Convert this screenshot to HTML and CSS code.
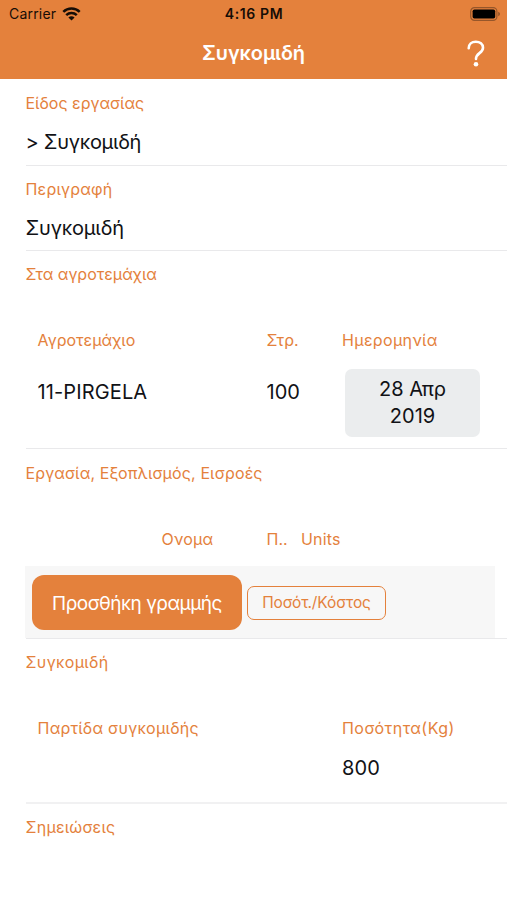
FILE: index.html
```
<!DOCTYPE html>
<html lang="el">
<head>
<meta charset="utf-8">
<title>Συγκομιδή</title>
<link rel="stylesheet" href="styles.css">
</head>
<body>
<header class="top">
  <div class="status">
    <div class="carrier"><span class="t-carrier">Carrier</span>
      <svg class="wifi" width="19" height="14" viewBox="0 0 18 14" fill="none" stroke="#160d06" stroke-width="2.5"><path d="M.8 4.9C5.4.5 12.6.5 17.2 4.9M3.7 8.1c3-2.8 7.6-2.8 10.6 0"/><path d="M9 13.6 5.9 10.5c1.7-1.6 4.5-1.6 6.2 0z" fill="#160d06" stroke="none"/></svg>
    </div>
    <span class="clock">4:16 PM</span>
    <svg class="battery" width="31" height="14" viewBox="0 0 31 14"><rect x=".7" y=".6" width="26.2" height="12.8" rx="3.8" fill="none" stroke="#96562a" stroke-width="1.2"/><rect x="2.6" y="2.4" width="22.6" height="9.2" rx="1.8" fill="#000"/><path d="M28.2 4.8c2.4.8 2.4 3.6 0 4.4z" fill="#96562a"/></svg>
  </div>
  <div class="nav">
    <h1 class="title">Συγκομιδή</h1>
    <svg class="help" width="18" height="27" viewBox="0 0 18 27"><path d="M1.7 8.2C1.7 4 4.7 1.7 8.8 1.7s7.2 2.4 7.2 6c0 5.4-7 5.5-7 11v.3" fill="none" stroke="#fff" stroke-width="2.6" stroke-linecap="round"/><circle cx="9" cy="24.2" r="2.3" fill="#fff"/></svg>
  </div>
</header>
<main>
  <section class="field kind"><div class="label">Είδος εργασίας</div><div class="value choice">&gt; Συγκομιδή</div></section>
  <section class="field desc"><div class="label spaced">Περιγραφή</div><div class="value text">Συγκομιδή</div></section>
  <section class="field plots"><div class="label">Στα αγροτεμάχια</div>
    <div class="grid heads"><div class="label">Αγροτεμάχιο</div><div class="label">Στρ.</div><div class="label wide">Ημερομηνία</div></div>
    <div class="grid plot"><div class="value code">11-PIRGELA</div><div class="value">100</div><div class="date"><span>28 Απρ</span><span>2019</span></div></div>
  </section>
  <section class="field work"><div class="label long">Εργασία, Εξοπλισμός, Εισροές</div>
    <div class="inputs"><div class="label spaced">Ονομα</div><div class="label">Π..</div><div class="label spaced">Units</div></div>
    <div class="actions"><button class="add">Προσθήκη γραμμής</button><button class="cost">Ποσότ./Κόστος</button></div>
  </section>
  <section class="field harvest"><div class="label wide">Συγκομιδή</div>
    <div class="grid batch"><div class="label batch-name">Παρτίδα συγκομιδής</div><div></div><div class="label quantity">Ποσότητα(Kg)</div></div>
    <div class="grid amount"><div></div><div></div><div class="value code">800</div></div>
  </section>
  <section class="field notes"><div class="label spaced">Σημειώσεις</div></section>
</main>
</body>
</html>
```

FILE: styles.css
```
* { box-sizing: border-box; }
body { margin: 0; height: 900px; overflow: hidden; background: #fff; color: #111216; font-family: Inter, "Noto Sans", sans-serif; }
.top { height: 79px; background: #e4813c; }
.status { height: 27px; display: grid; grid-template-columns: 1fr auto 1fr; align-items: center; padding: 0 6px 0 9px; color: #160d06; font-size: 14px; line-height: 20px; letter-spacing: .2px; }
.carrier { display: flex; align-items: center; gap: 6px; }
.clock { font-weight: 600; letter-spacing: .6px; margin-left: -2px; }
.battery { justify-self: end; }
.nav { height: 52px; display: grid; grid-template-columns: 1fr auto 1fr; align-items: center; padding: 0 22px; }
.title { grid-column: 2; margin: 0; color: #fff; font-size: 20px; line-height: 24px; font-weight: 600; letter-spacing: -.1px; }
.help { justify-self: end; }
main { padding-left: 25.5px; }
.field { border-bottom: 1px solid #e9e9eb; }
.label { color: #e4813c; font-size: 16px; line-height: 20px; white-space: nowrap; }
.spaced { letter-spacing: .2px; }
.wide { letter-spacing: .33px; }
.long { letter-spacing: .12px; }
.batch-name { letter-spacing: .24px; }
.quantity { letter-spacing: .45px; }
.value { font-size: 20px; line-height: 24px; white-space: nowrap; }
.choice { letter-spacing: -.3px; }
.text { letter-spacing: -.2px; }
.code { letter-spacing: .12px; }
.kind { height: 87px; padding-top: 14px; }
.desc { height: 85px; padding-top: 13px; }
.kind .value, .desc .value { margin-top: 17px; }
.plots { height: 198px; padding-top: 13px; }
.grid { display: grid; grid-template-columns: 229px 75.5px 1fr; padding-left: 12px; }
.heads { margin-top: 46px; }
.plot { margin-top: 19px; }
.plot .value { padding-top: 11px; }
.date { width: 135px; height: 68px; margin-left: 3px; padding-top: 7px; border-radius: 7px; background: #ebedee; display: flex; flex-direction: column; align-items: center; font-size: 20px; line-height: 27px; }
.work { height: 190px; padding-top: 14px; }
.inputs { display: grid; grid-template-columns: 105px 34.5px 1fr; padding-left: 136px; margin-top: 46px; }
.actions { display: flex; align-items: center; gap: 5px; height: 72px; width: 470px; margin-top: 17px; margin-left: -.5px; padding-left: 7px; background: #f7f7f7; }
button { font-family: inherit; padding: 0; white-space: nowrap; }
.add { width: 210px; height: 55px; padding-top: 2px; border: 0; border-radius: 12px; background: #e4813c; color: #fff; font-size: 19px; letter-spacing: -.5px; }
.cost { width: 139px; height: 34px; margin-top: 1px; border: 1.5px solid #e4813c; border-radius: 7px; background: transparent; color: #e4813c; font-size: 15.5px; letter-spacing: -.1px; }
.harvest { height: 165px; padding-top: 13px; border-bottom: 2px solid #f1f1f2; }
.batch { margin-top: 46px; }
.amount { margin-top: 18px; }
.notes { padding-top: 13px; border: 0; }
```
